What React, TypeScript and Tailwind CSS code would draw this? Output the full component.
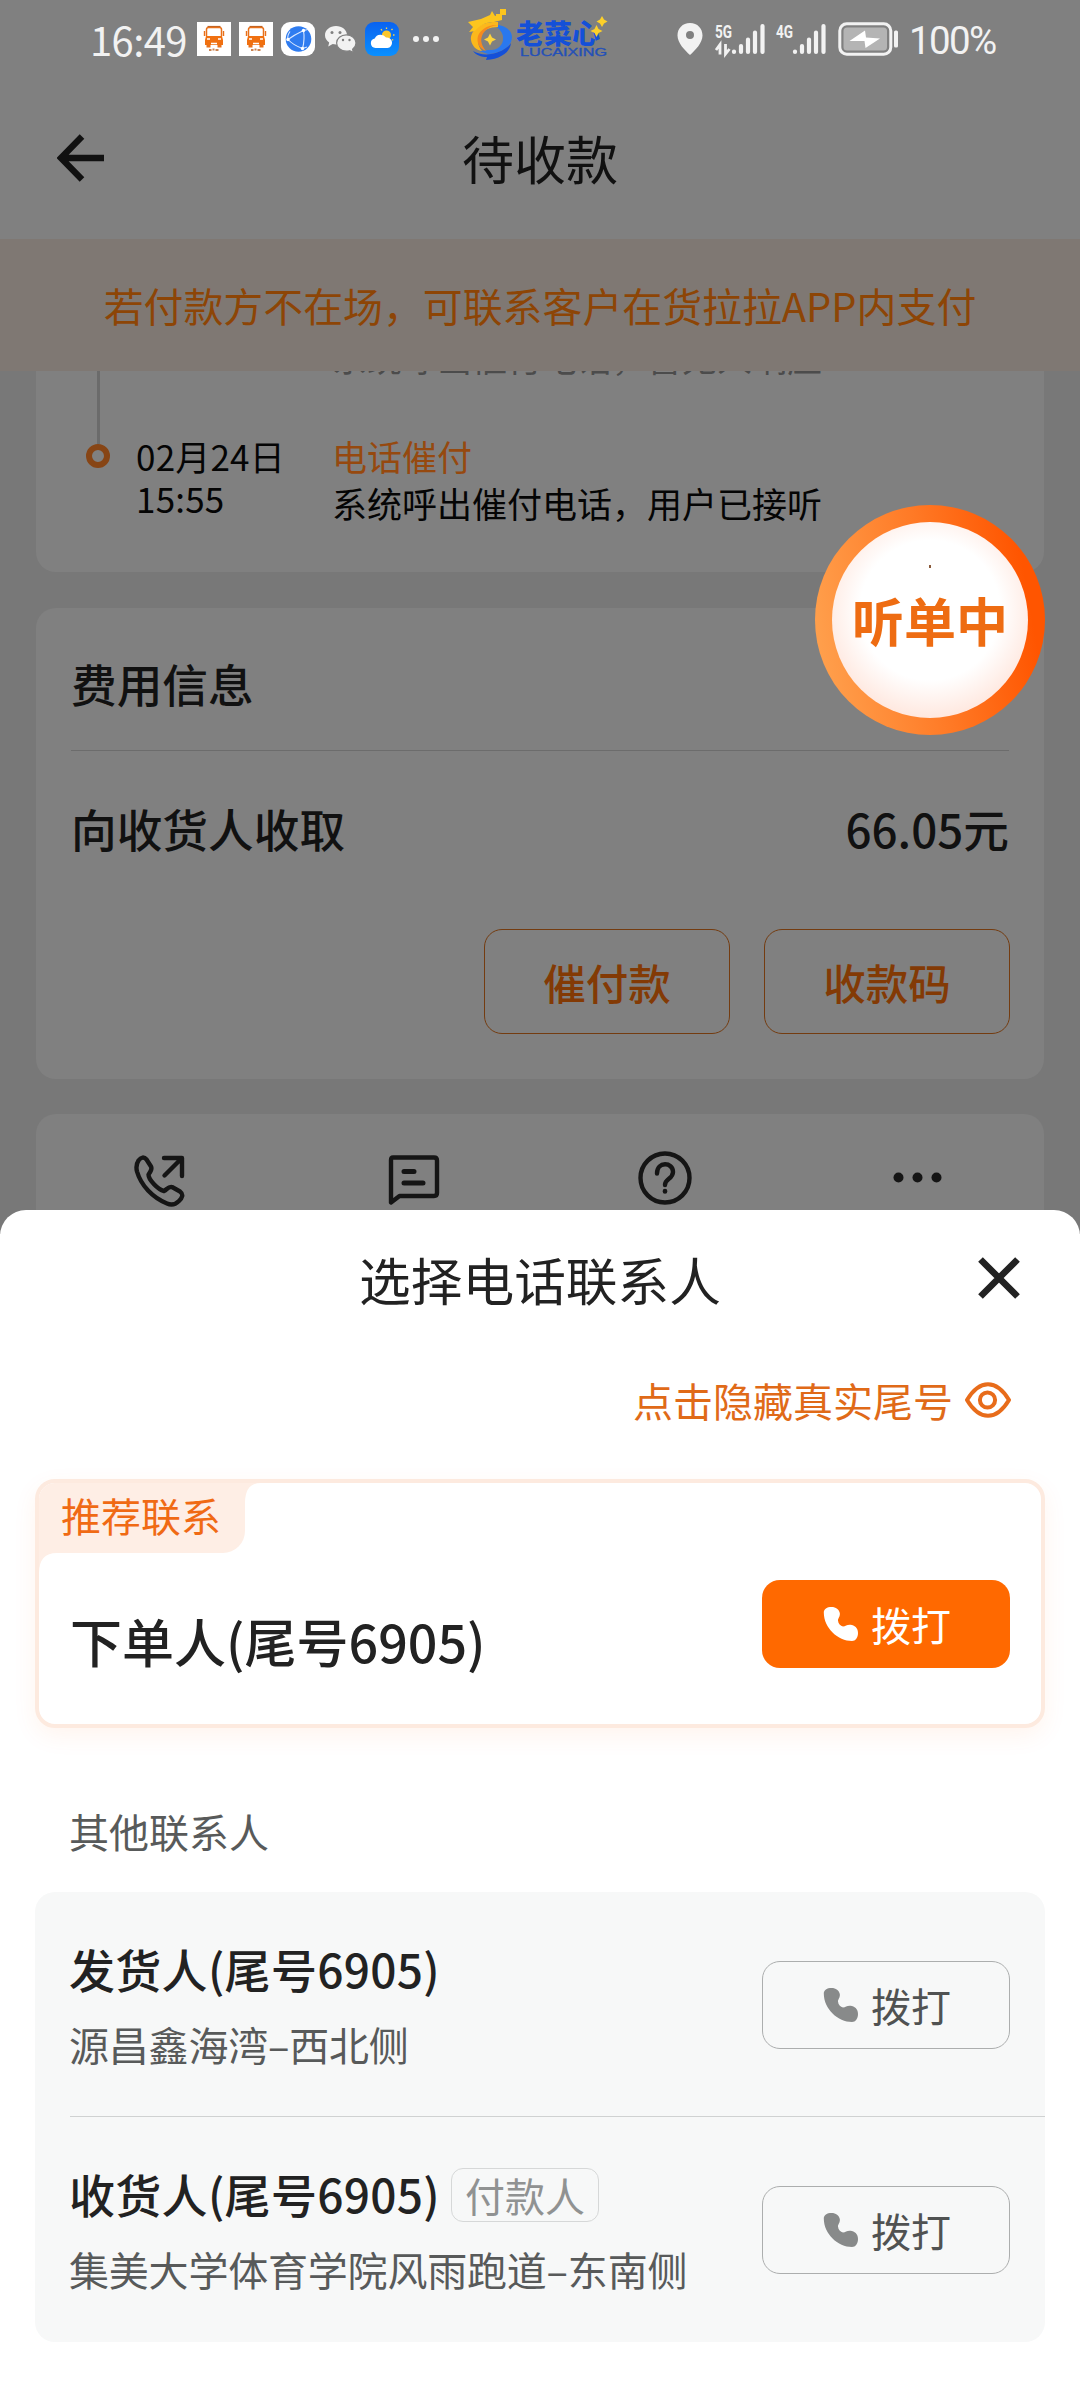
import type { ReactNode } from 'react'

function BusIcon({ className = '' }: { className?: string }) {
  return (
    <svg viewBox="0 0 34 34" className={`h-[34px] w-[34px] ${className}`}>
      <rect width="34" height="34" fill="#fff" />
      <path d="M10.5 4.5h13" stroke="#b5622a" strokeWidth="1.2" />
      <path
        d="M9.5 14V7.5q0-2 2-2h11q2 0 2 2V14"
        fill="none"
        stroke="#e8701a"
        strokeWidth="1.5"
      />
      <path d="M9 14h16l1 4v5H8v-5z" fill="#f07010" />
      <path d="M7.5 9v5M26.5 9v5" stroke="#e8701a" strokeWidth="1.4" />
      <path d="M9.5 23h4v2.5h-4zM20.5 23h4v2.5h-4z" fill="#e8701a" />
      <path d="M10 17h3M21 17h3M14 21.5h6" stroke="#fff" strokeWidth="1.6" />
      <path d="M12 28h2.5M15.5 27.5h2M18.5 28h3" stroke="#c98250" strokeWidth="1.8" />
    </svg>
  )
}

function GlobeIcon({ className = '' }: { className?: string }) {
  return (
    <svg viewBox="0 0 34 34" className={`h-[34px] w-[34px] ${className}`}>
      <rect width="34" height="34" rx="9" fill="#fff" />
      <circle cx="17.5" cy="17" r="12.8" fill="#2f7cf0" />
      <g stroke="#dce9ff" strokeWidth="1.1" fill="none">
        <path d="M7 17.5Q13 13 22.5 8.5Q24 17 21.5 27" />
        <path d="M7 17.5Q12 23 21.5 26.5" />
        <path d="M9 9.5Q6 14 7 17.5M22.5 8.5L26 7.8M21.5 26.5L26 25" />
      </g>
      <g fill="#fff">
        <circle cx="7" cy="17.5" r="1.7" />
        <circle cx="22.5" cy="8.5" r="1.7" />
        <circle cx="21.5" cy="26.5" r="1.7" />
      </g>
    </svg>
  )
}

function WechatIcon({ className = '' }: { className?: string }) {
  return (
    <svg viewBox="0 0 31 27" className={`h-[27px] w-[31px] ${className}`}>
      <path
        d="M11 0C4.8 0 0 4 0 9.2c0 3 1.6 5.5 4.2 7.2l-1 4 4.5-2.3c1 .3 2.2.4 3.3.4 6 0 11-4 11-9.3S17 0 11 0z"
        fill="#f2f2f2"
      />
      <path
        d="M21.3 8.8c5.4 0 9.7 3.7 9.7 8.2 0 2.6-1.3 4.7-3.4 6.2l.8 3.3-3.7-1.8c-1 .3-2.2.5-3.4.5-5.4 0-9.7-3.7-9.7-8.2s4.3-8.2 9.7-8.2z"
        fill="#f2f2f2"
        stroke="#808080"
        strokeWidth="1.2"
      />
      <g fill="#808080">
        <circle cx="7" cy="6.5" r="1.5" />
        <circle cx="15" cy="6.5" r="1.5" />
        <circle cx="18" cy="14" r="1.2" />
        <circle cx="24.5" cy="14" r="1.2" />
      </g>
    </svg>
  )
}

function WeatherIcon({ className = '' }: { className?: string }) {
  return (
    <svg viewBox="0 0 34 34" className={`h-[34px] w-[34px] ${className}`}>
      <defs>
        <linearGradient id="sky" x1="0" y1="0" x2="0" y2="1">
          <stop offset="0" stopColor="#0a62f0" />
          <stop offset="1" stopColor="#0a90ff" />
        </linearGradient>
      </defs>
      <rect width="34" height="34" rx="9" fill="url(#sky)" />
      <circle cx="21.5" cy="13" r="4.6" fill="#fbc62c" />
      <path
        d="M16 7l1 1.5M21.5 5.5v1.5M26.5 8l1-1.2M28 13h1.5M27 17.5l1.2.8"
        stroke="#fbd34a"
        strokeWidth="1.3"
      />
      <path
        d="M10.5 26a4.8 4.8 0 0 1-.8-9.5 6.5 6.5 0 0 1 11.3-1 5.3 5.3 0 0 1 1.5 10.5z"
        fill="#fff"
      />
    </svg>
  )
}

function Logo({ className = '' }: { className?: string }) {
  return (
    <svg viewBox="0 0 144 56" className={`h-[56px] w-[144px] ${className}`}>
      <path d="M27 18c10-1 18 5 18 12 0 9-10 16-24 17l-9-3c13 0 23-5 24-13 0-5-3-9-9-13z" fill="#2a78ee" />
      <ellipse cx="24" cy="32" rx="12" ry="11" fill="#808080" />
      <path d="M31 15C14 14 3 23 4 33c1 6 5 10 11 11-4-5-5-10-2-15 3-6 10-9 18-9z" fill="#fbb81c" />
      <path d="M31 18c-8 1-14 5-16 11-2 5 0 10 4 15-6-2-10-8-8-15 2-6 10-12 20-11z" fill="#f68a1e" />
      <path d="M1 15l13-3 9-4 2-4 3 5 7-2v6l-8 2c-9 0-15 4-19 9l-6 1 4-5z" fill="#fcc51e" />
      <path d="M33 2h6v6h-6zM29 7h4v4h-4z" fill="#fcc51e" />
      <path d="M6 44c5 3 12 4 18 3 8-1 16-5 20-11-1 9-10 16-25 17l1-3c-6 0-11-2-14-6z" fill="#1450d8" />
      <path d="M23 26.5l2 4 4 2-4 2-2 4-2-4-4-2 4-2z" fill="#ffd43a" />
      <text
        x="49"
        y="37"
        fontSize="27"
        fontWeight="900"
        textLength="84"
        lengthAdjust="spacingAndGlyphs"
        fill="#1450d8"
        fontFamily="Noto Sans CJK SC, sans-serif"
      >
        老菜心
      </text>
      <text
        x="53"
        y="48.5"
        fontSize="10"
        textLength="87"
        lengthAdjust="spacingAndGlyphs"
        fill="#2450b8"
        stroke="#2450b8"
        strokeWidth=".3"
        fontFamily="Liberation Sans, sans-serif"
      >
        LUCAIXING
      </text>
      <path d="M135 9l2 3.5 3.5 2-3.5 2-2 3.5-2-3.5-3.5-2 3.5-2z" fill="#fcd02a" />
      <path d="M129.5 18l2 4 4 2-4 2-2 4-2-4-4-2 4-2z" fill="#fcd02a" />
    </svg>
  )
}

function Signal({ label, arrows, className = '' }: { label: string; arrows?: boolean; className?: string }) {
  return (
    <svg viewBox="0 0 51 34" className={`h-[34px] w-[51px] overflow-visible ${className}`}>
      <text
        x="0"
        y="15.5"
        fontSize="19"
        fontWeight="700"
        textLength="17"
        lengthAdjust="spacingAndGlyphs"
        fill="#f2f2f2"
        fontFamily="Roboto, sans-serif"
      >
        {label}
      </text>
      {arrows && (
        <path d="M5 32.5V22.5L1 28M10.5 22v10l4-5" fill="none" stroke="#f2f2f2" strokeWidth="2.8" />
      )}
      <g stroke="#f2f2f2" strokeWidth="4.2" strokeLinecap="round">
        <path d="M19 29.5v.5M26 24v6M33 17.5v12.5M40 10.5v19.5M47.5 4v26" />
      </g>
    </svg>
  )
}

function BatteryIcon({ className = '' }: { className?: string }) {
  return (
    <svg viewBox="0 0 60 34" className={`h-[34px] w-[60px] ${className}`}>
      <rect x="1.8" y="1.8" width="51" height="30.4" rx="7" fill="none" stroke="#f2f2f2" strokeWidth="3" />
      <rect x="5.5" y="5.5" width="43.5" height="23" rx="3.5" fill="#b4b4b4" />
      <path d="M27 8.5L11.5 19l15 0 1 7L42 16.5l-14-1z" fill="#fff" />
      <rect x="56" y="8.5" width="4" height="17" rx="1.5" fill="#f2f2f2" />
    </svg>
  )
}

function PhoneIcon({ className = '' }: { className?: string }) {
  return (
    <svg viewBox="0 0 36 36" className={`h-[36px] w-[36px] ${className}`}>
      <path
        d="M.8 6.5C.8 3 4 1 8.500 1c4.500 0 7.500 2.500 8.300 6 .6 3.500-2 5.500-1.800 7.500.2 3 2.500 5.500 5 6 2.500 0 4-2 7.500-1.700 4 .4 7.500 3 7.500 8.200 0 4.500-2.500 8-6 8C15 35 .8 22 .8 6.500z"
        fill="currentColor"
      />
    </svg>
  )
}

function EyeIcon() {
  return (
    <svg viewBox="0 0 46 36" className="mt-[-4px] h-[36px] w-[46px]" fill="none" stroke="#e86c1a" strokeWidth="4">
      <path d="M2 18C8 8 14.5 2.2 23 2.2S38 8 44 18C38 28 31.5 33.8 23 33.8S8 28 2 18z" strokeLinejoin="round" />
      <circle cx="22.5" cy="18" r="7.6" />
    </svg>
  )
}

function StatusBar() {
  return (
    <div className="flex h-[78px] items-center pl-[90px] text-[#f2f2f2]">
      <span className="w-[107px] text-[40px] leading-none tracking-[-0.6px]">16:49</span>
      <BusIcon />
      <BusIcon className="ml-2" />
      <GlobeIcon className="ml-2" />
      <WechatIcon className="ml-[10px]" />
      <WeatherIcon className="ml-[9px]" />
      <div className="ml-[14px] flex gap-1">
        <i className="size-1.5 rounded-full bg-[#f2f2f2]" />
        <i className="size-1.5 rounded-full bg-[#f2f2f2]" />
        <i className="size-1.5 rounded-full bg-[#f2f2f2]" />
      </div>
      <Logo className="ml-[28px] mt-[-8px]" />
      <svg viewBox="0 0 26 32" className="ml-[66px] h-[32px] w-[26px]">
        <path
          d="M13 0C5.5 0 .5 5.5.5 12.5.5 20 8 27.5 13 32c5-4.5 12.5-12 12.5-19.5C25.5 5.5 20.5 0 13 0zm0 8a4 4 0 1 1 0 8 4 4 0 0 1 0-8z"
          fill="#f2f2f2"
        />
      </svg>
      <Signal label="5G" arrows className="ml-3" />
      <Signal label="4G" className="ml-[10px]" />
      <BatteryIcon className="ml-[11px]" />
      <span className="ml-[11px] mt-1 font-[Roboto] text-[38.5px] leading-none tracking-[-1.6px]">100%</span>
    </div>
  )
}

function Timeline() {
  return (
    <div className="mx-9 flex h-[201px] overflow-hidden rounded-b-[20px] bg-[#808080] pl-[50px] text-[35px]">
      <div className="flex w-6 flex-col items-center">
        <div className="h-[73px] w-[3px] bg-[#6b6b6b]" />
        <div className="size-6 rounded-full border-[6px] border-[#874515]" />
      </div>
      <div className="ml-[26px] w-[196px] pt-[64px] leading-[42px] tracking-[0.2px] text-[#050505]">
        <p>02月24日</p>
        <p>15:55</p>
      </div>
      <div className="leading-[47px] text-[#050505]">
        <p className="-mt-[38px] text-[#4c4c4c]">系统呼出催付电话，暂无人响应</p>
        <p className="mt-[52px] text-[#96490f]">电话催付</p>
        <p>系统呼出催付电话，用户已接听</p>
      </div>
    </div>
  )
}

function OutlineButton({ children }: { children: ReactNode }) {
  return (
    <button className="flex h-[105px] w-[246px] items-center justify-center rounded-[18px] border border-[#743c10] text-[42.5px] font-medium text-[#833a05]">
      {children}
    </button>
  )
}

function FeeCard() {
  return (
    <div className="mx-9 mt-9 h-[471px] rounded-[20px] bg-[#808080] px-[35px] text-[45.7px] font-medium text-[#111]">
      <div className="flex h-[143px] items-center border-b border-[#6c6c6c] pt-[9px]">费用信息</div>
      <div className="flex h-[160px] items-center justify-between pb-[6px]">
        <span>向收货人收取</span>
        <span>66.05元</span>
      </div>
      <div className="-mr-px mt-[18px] flex justify-end gap-[34px]">
        <OutlineButton>催付款</OutlineButton>
        <OutlineButton>收款码</OutlineButton>
      </div>
    </div>
  )
}

function ToolCard() {
  return (
    <div className="mx-9 mt-[35px] grid h-[140px] grid-cols-4 rounded-t-[20px] bg-[#808080] pt-[34px] text-[#151515]">
      <svg viewBox="0 0 60 60" className="ml-[94px] size-[60px]" fill="none" stroke="currentColor" strokeWidth="4.4" strokeLinejoin="round" strokeLinecap="round">
        <path d="M8.5 12.5C11 9 14 8.5 16.5 11.5l4.5 7c1.500 3-.5 5.500-2.500 8 0 5 9 15 15.500 16.500 3-1.500 4.500-5 8-4l8 4.500c4 3 2 6.500-1 9.500-3.500 3.500-7.500 4.500-12 2.500C22.500 49.500 11 37.500 7 23.500c-1-4-.5-8 1.500-11z" />
        <path d="M34 10h18v18M51.5 10.5L34.5 27.5" />
      </svg>
      <svg viewBox="0 0 60 60" className="ml-[96px] size-[60px]" fill="none" stroke="currentColor" strokeWidth="4.4" strokeLinejoin="round" strokeLinecap="round">
        <path d="M9 9.5h41q3 0 3 3V45q0 3-3 3H15.5L7 54.5V12q0-2.5 2-2.5z" />
        <path d="M20 23.5h10M20 35h19" strokeWidth="5" />
      </svg>
      <svg viewBox="0 0 60 60" className="ml-[95px] size-[60px]" fill="none" stroke="currentColor" strokeWidth="4.4" strokeLinecap="round">
        <circle cx="30" cy="30" r="24.5" />
        <path d="M22 25.5c0-12.5 16-11.5 16-1.5 0 7-8 6.5-8 13" />
        <path d="M30 43v.5" strokeWidth="4.6" />
      </svg>
      <svg viewBox="0 0 60 60" className="ml-[95px] size-[60px]" fill="currentColor">
        <circle cx="11.5" cy="29.5" r="5" />
        <circle cx="30.5" cy="29.5" r="5" />
        <circle cx="49.5" cy="29.5" r="5" />
      </svg>
    </div>
  )
}

function CallButton({ primary }: { primary?: boolean }) {
  return (
    <button
      className={`flex h-[88px] w-[248px] shrink-0 items-center rounded-[18px] pl-[60px] text-[40px] ${
        primary ? 'bg-[#ff6900] text-white' : 'border border-[#acaeae] text-[#505252]'
      }`}
    >
      <PhoneIcon className={primary ? 'ml-px text-white' : 'text-[#888a8a]'} />
      <span className="ml-3">拨打</span>
    </button>
  )
}

interface ContactProps {
  name: string
  address: string
  payer?: boolean
}

function Contact({ name, address, payer }: ContactProps) {
  return (
    <div className="flex h-[225px] justify-between pr-[35px]">
      <div className="-ml-px pt-[50px]">
        <div className="flex h-[60px] items-center text-[46px] font-medium tracking-[0.3px] text-[#222]">
          <span className="mt-[-7px]">{name}</span>
          {payer && (
            <span className="ml-[11px] mt-[-5px] flex h-[54px] w-[148px] items-center justify-center rounded-xl border border-[#d6d8d8] text-[40px] font-normal leading-none tracking-normal text-[#909292]">
              付款人
            </span>
          )}
        </div>
        <p className="mt-3 text-[40px] leading-[60px] tracking-[-0.2px] text-[#585a5a]">{address}</p>
      </div>
      <div className="pt-[69px]">
        <CallButton />
      </div>
    </div>
  )
}

function ContactSheet() {
  return (
    <div className="relative -mt-6 h-[1190px] rounded-t-[26px] bg-white">
      <div className="grid h-[140px] grid-cols-[1fr_auto_1fr] items-center text-[51.7px] text-[#222]">
        <span className="col-start-2 pb-[2px] leading-[74px]">选择电话联系人</span>
        <svg viewBox="0 0 42 42" className="mr-[60px] mt-[-4px] size-[42px] justify-self-end" stroke="#222" strokeWidth="6.6">
          <path d="M2.5 2.5l37 37M39.5 2.5l-37 37" />
        </svg>
      </div>
      <div className="flex h-[104px] items-center justify-end gap-[12px] pr-[69px] text-[40px] text-[#e06a18]">
        <span className="mt-[-5px]">点击隐藏真实尾号</span>
        <EyeIcon />
      </div>

      <div className="mx-[35px] mt-[25px] h-[249px] overflow-hidden rounded-[20px] border-4 border-[#fdeadf] shadow-[0_8px_24px_#ff690012]">
        <div className="flex">
          <div className="relative flex h-[70px] w-[206px] items-center rounded-br-[22px] bg-[#feeee5] pl-[22px] text-[40px] text-[#f06a14]">
            <span className="mt-[-6px]">推荐联系</span>
            <svg viewBox="0 0 16 20" className="absolute left-full top-0 h-5 w-4">
              <path d="M0 0h16Q0 0 0 20z" fill="#feeee5" />
            </svg>
            <svg viewBox="0 0 18 20" className="absolute left-0 top-full h-5 w-[18px]">
              <path d="M0 0h18Q0 0 0 20z" fill="#feeee5" />
            </svg>
          </div>
        </div>
        <div className="flex items-start justify-between pl-[31px] pr-[31px] pt-[27px]">
          <span className="pt-[24px] text-[52px] font-medium leading-[74px] text-[#222]">下单人(尾号6905)</span>
          <CallButton primary />
        </div>
      </div>

      <p className="ml-[69px] mt-[73px] text-[40px] leading-[60px] text-[#585a5a]">其他联系人</p>

      <div className="mx-[35px] mt-[31px] rounded-[20px] bg-[#f7f8f8] pl-[35px]">
        <Contact name="发货人(尾号6905)" address="源昌鑫海湾–西北侧" />
        <div className="-mt-px h-px bg-[#d0d2d2]" />
        <Contact name="收货人(尾号6905)" address="集美大学体育学院风雨跑道–东南侧" payer />
      </div>
    </div>
  )
}

export default function App() {
  return (
    <div className="relative h-[2400px] w-[1080px] overflow-hidden bg-white font-['Noto_Sans_CJK_SC',sans-serif]">
      <div className="h-[1234px] overflow-hidden bg-[#787878]">
        <div className="h-[239px] bg-[#808080]">
          <StatusBar />
          <div className="grid h-[160px] grid-cols-[1fr_auto_1fr] items-center text-[#111]">
            <svg viewBox="0 0 48 48" className="ml-[57px] size-[48px]" fill="none" stroke="currentColor" strokeWidth="6.4">
              <path d="M25 2.5L4 24l21 21.5M3 24h44" />
            </svg>
            <h1 className="text-[52px]">待收款</h1>
          </div>
        </div>
        <div className="flex h-[132px] items-center justify-center bg-[#7f7873] text-[39.9px] text-[#8d4506]">
          若付款方不在场，可联系客户在货拉拉APP内支付
        </div>
        <Timeline />
        <FeeCard />
        <ToolCard />
      </div>

      <ContactSheet />

      <div className="absolute left-[815px] top-[505px] flex size-[230px] items-center justify-center rounded-full bg-[linear-gradient(80deg,#ffa552,#ff7a26_50%,#ff5500_88%)]">
        <div className="relative flex size-[196px] items-center justify-center rounded-full bg-[radial-gradient(circle_at_50%_45%,#fff_48%,#ffe4da_78%)] text-[52px] font-bold text-[#ee6c12]">
          听单中
          <i className="absolute left-[97px] top-[43px] h-[3px] w-[2px] bg-[#8a5a3a]" />
        </div>
      </div>
    </div>
  )
}
